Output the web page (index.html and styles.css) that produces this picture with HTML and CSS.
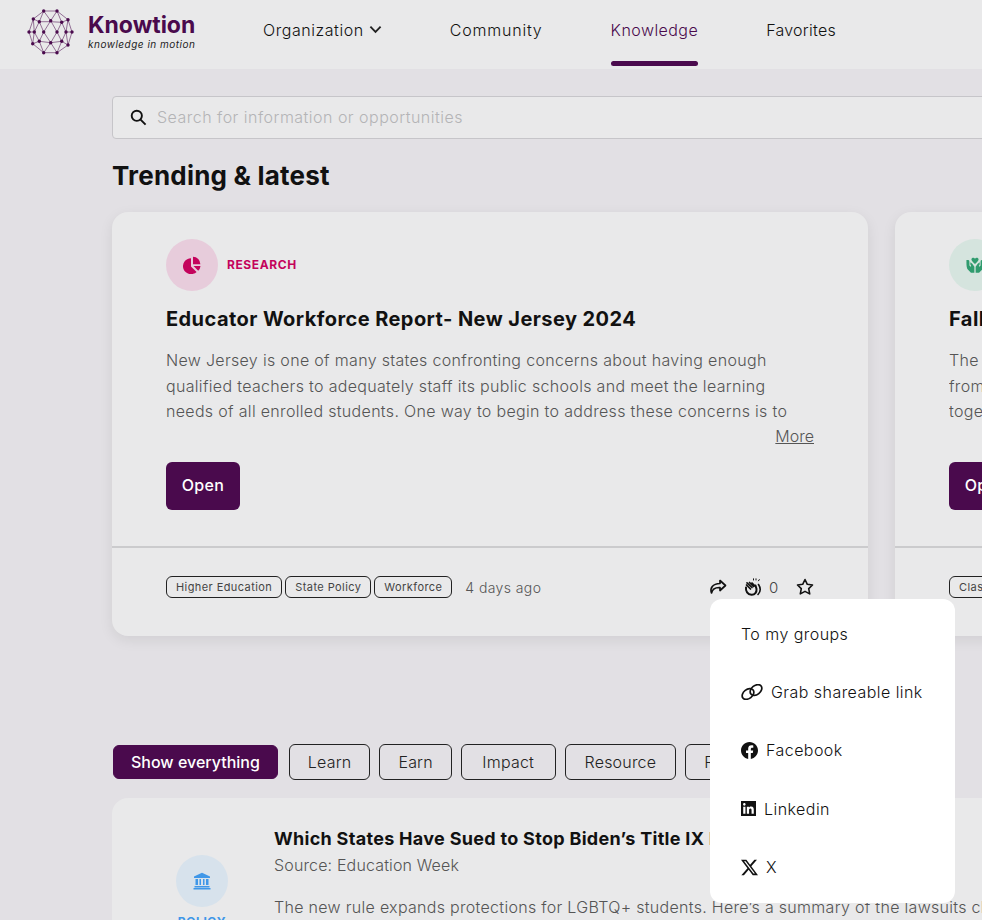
FILE: index.html
```html
<!DOCTYPE html>
<html lang="en">
<head>
    <meta charset="UTF-8">
    <meta name="viewport" content="width=device-width, initial-scale=1.0">
    <title>Knowtion</title>
    <link rel="stylesheet" href="styles.css">
</head>
<body>
    <header class="topbar">
        <a href="#" class="brand">
            <svg class="brand-mark" viewBox="26 7 50 50" fill="none" stroke="#4a0a4d" stroke-width=".55">
                <path d="M43.7 11H57L68 19.7 72 32 68 45 57 52.7H43.7L32.7 43.7 29 32 33.3 19Z"/>
                <path d="M43.7 11 39.3 21.7 33.3 19M43.7 11 50.7 20.7 57 11 61.7 22.3 68 19.7M39.3 21.7H50.7L61.7 22.3 66 32 61.7 41.3 50.7 42.7 39.3 41.3 34.3 32 39.3 21.7"/>
                <path d="M29 32H34.3M66 32H72M39.3 21.7 43.7 32 39.3 41.3M50.7 20.7 43.7 32 50.7 42.7 57 32 50.7 20.7M61.7 22.3 57 32 61.7 41.3M39.3 41.3 32.7 43.7M61.7 41.3 68 45M39.3 41.3 43.7 52.7 50.7 42.7 57 52.7 61.7 41.3M33.3 19 34.3 32 32.7 43.7M68 19.7 66 32 68 45"/>
                <g fill="#4a0a4d" stroke="none">
                    <circle cx="43.7" cy="11" r="1.7"/><circle cx="57" cy="11" r="1.7"/>
                    <circle cx="33.3" cy="19" r="1.7"/><circle cx="68" cy="19.7" r="1.7"/>
                    <circle cx="39.3" cy="21.7" r="1.7"/><circle cx="50.7" cy="20.7" r="1.7"/><circle cx="61.7" cy="22.3" r="1.7"/>
                    <circle cx="29" cy="32" r="1.7"/><circle cx="34.3" cy="32" r="1.7"/><circle cx="43.7" cy="32" r="1.7"/>
                    <circle cx="57" cy="32" r="1.7"/><circle cx="66" cy="32" r="1.7"/><circle cx="72" cy="32" r="1.7"/>
                    <circle cx="39.3" cy="41.3" r="1.7"/><circle cx="50.7" cy="42.7" r="1.7"/><circle cx="61.7" cy="41.3" r="1.7"/>
                    <circle cx="32.7" cy="43.7" r="1.7"/><circle cx="68" cy="45" r="1.7"/>
                    <circle cx="43.7" cy="52.7" r="1.7"/><circle cx="57" cy="52.7" r="1.7"/>
                </g>
            </svg>
            <span class="brand-text">
                <span class="brand-name">Knowtion</span>
                <span class="brand-tag">knowledge in motion</span>
            </span>
        </a>
        <nav class="nav">
            <a href="#" class="nav-link">Organization
                <svg class="chevron" viewBox="0 0 14 9" fill="none" stroke="#222" stroke-width="2"><path d="M1.5 1.5 7 7l5.5-5.5"/></svg>
            </a>
            <a href="#" class="nav-link nav-wide">Community</a>
            <a href="#" class="nav-link active">Knowledge</a>
            <a href="#" class="nav-link nav-narrow">Favorites</a>
        </nav>
    </header>

    <main class="content">
        <div class="search">
            <svg class="search-icon" viewBox="0 0 18 18" fill="none" stroke="#111" stroke-width="2"><circle cx="7.2" cy="7.2" r="5.4"/><path d="M11.2 11.2 16.5 16.5"/></svg>
            <span class="search-hint">Search for information or opportunities</span>
        </div>

        <h1 class="section-title">Trending &amp; latest</h1>

        <div class="cards">
            <article class="card">
                <div class="card-body">
                    <div class="kind">
                        <span class="kind-circle research-bg">
                            <svg class="kind-icon" viewBox="0 0 18 18" fill="#c4035c"><path d="M8 2.2v8.3l5.6 5.4A8 8 0 1 1 8 2.2Z"/><path d="M10 .8a7.4 7.4 0 0 1 7.4 7.4H10Z"/><path d="M10.500 10h7a7.600 7.600 0 0 1-2.300 4.800Z"/></svg>
                        </span>
                        <span class="kind-label research">RESEARCH</span>
                    </div>
                    <h2 class="card-title">Educator Workforce Report- New Jersey 2024</h2>
                    <p class="card-text">New Jersey is one of many states confronting concerns about having enough qualified teachers to adequately staff its public schools and meet the learning needs of all enrolled students. One way to begin to address these concerns is to</p>
                    <div class="more-row"><a href="#" class="more">More</a></div>
                    <button class="btn-open">Open</button>
                </div>
                <div class="card-foot">
                    <span class="tag">Higher Education</span>
                    <span class="tag">State Policy</span>
                    <span class="tag">Workforce</span>
                    <span class="time">4 days ago</span>
                    <div class="actions">
                        <svg class="act-icon" viewBox="0 0 18 16" fill="none" stroke="#111" stroke-width="1.700"><path d="M11 1.500 16.500 6.500 11 11.500V8.500C6.500 8.300 3.500 9.500 2.500 14 .8 9 3.500 4.800 11 4.500Z" stroke-linejoin="round"/></svg>
                        <svg class="act-icon clap" viewBox="0 0 18 18" fill="none" stroke="#111" stroke-linecap="round">
                            <path d="M2 9.500C1.500 13 3.500 16.500 7.500 16.800 11 17 12.800 14 12.500 11L11.500 7.500" stroke-width="2"/>
                            <path d="M2.500 7 6.500 11M3 4.800 8 9.500M5.500 4.500 9.500 8.500M8 5 11 8" stroke-width="1.700"/>
                            <path d="M14.500 6.500C16.500 9.500 16.800 13.500 14 16.500" stroke-width="1.600"/>
                            <path d="M9.500 2V.8M12 2V.8M14.500 2.800 15.300 1.600" stroke-width="1"/>
                        </svg>
                        <span class="count">0</span>
                        <svg class="act-icon star" viewBox="0 0 18 18" fill="none" stroke="#111" stroke-width="1.600" stroke-linejoin="round"><path d="M9 1.500 11.300 6.300 16.500 7 12.700 10.600 13.700 15.900 9 13.400 4.300 15.900 5.300 10.600 1.500 7 6.700 6.300Z"/></svg>

                        <div class="share-menu">
                            <a href="#" class="share-item first">To my groups</a>
                            <a href="#" class="share-item">
                                <svg class="share-link" viewBox="0 0 22 16" fill="none" stroke="#111" stroke-width="1.700">
                                    <ellipse cx="7" cy="10" rx="6.500" ry="4.500" transform="rotate(-38 7 10)"/>
                                    <ellipse cx="15" cy="6" rx="6.500" ry="4.500" transform="rotate(-38 15 6)"/>
                                </svg>
                                Grab shareable link
                            </a>
                            <a href="#" class="share-item">
                                <svg class="share-svg" viewBox="0 0 24 24" fill="#111"><path d="M24 12.073c0-6.627-5.373-12-12-12s-12 5.373-12 12c0 5.990 4.388 10.954 10.125 11.854v-8.385H7.078v-3.470h3.047V9.430c0-3.007 1.792-4.669 4.533-4.669 1.312 0 2.686.235 2.686.235v2.953H15.830c-1.491 0-1.956.925-1.956 1.874v2.250h3.328l-.532 3.470h-2.796v8.385C19.612 23.027 24 18.062 24 12.073z"/></svg>
                                Facebook
                            </a>
                            <a href="#" class="share-item">
                                <svg class="share-in" viewBox="0 0 24 24" fill="#111"><path d="M0 0H24V24H0ZM20.447 20.452v-6.286c0-3.085-.666-5.455-4.267-5.455-1.733 0-2.893.950-3.370 1.850h-.046V9H9.351v11.452h3.554v-5.667c0-1.494.283-2.939 2.136-2.939 1.825 0 1.852 1.709 1.852 3.037v5.569ZM5.337 7.433c1.139 0 2.064-.926 2.064-2.065 0-1.138-.925-2.063-2.064-2.063-1.143 0-2.063.925-2.063 2.063 0 1.139.920 2.065 2.063 2.065ZM7.119 20.452V9H3.555v11.452Z" fill-rule="evenodd"/></svg>
                                Linkedin
                            </a>
                            <a href="#" class="share-item">
                                <svg class="share-svg" viewBox="0 0 24 24" fill="#111"><path d="M18.901 1.153h3.680l-8.040 9.190L24 22.846h-7.406l-5.800-7.584-6.638 7.584H.474l8.600-9.830L0 1.154h7.594l5.243 6.932ZM17.610 20.644h2.039L6.486 3.240H4.298Z"/></svg>
                                X
                            </a>
                        </div>
                    </div>
                </div>
            </article>

            <article class="card">
                <div class="card-body">
                    <div class="kind">
                        <span class="kind-circle impact-bg">
                            <svg class="kind-icon" viewBox="0 0 20 18" fill="#2f9b6e"><path d="M10 2C11 .3 14 .8 14 3 14 4.500 11.500 6.500 10 8 8.500 6.500 6 4.500 6 3 6 .8 9 .3 10 2Z"/><path d="M.5 3.500H2.500C3.500 3.500 3.800 4.500 3.800 6V9.500L5 11 5.800 10.200 4.800 8.500V6L7 7.500 9.300 11V17.500H5.500L1.500 13.500C.3 11 .5 7 .5 3.500Z"/><path d="M19.500 3.500H17.500C16.500 3.500 16.200 4.500 16.200 6V9.500L15 11 14.200 10.200 15.200 8.500V6L13 7.500 10.700 11V17.500H14.500L18.500 13.500C19.700 11 19.500 7 19.500 3.500Z"/></svg>
                        </span>
                    </div>
                    <h2 class="card-title">Fall</h2>
                    <p class="card-text short">The U<br>from<br>toge</p>
                    <div class="more-row"></div>
                    <button class="btn-open">Open</button>
                </div>
                <div class="card-foot">
                    <span class="tag">Class</span>
                </div>
            </article>
        </div>

        <div class="filters">
            <a href="#" class="chip selected">Show everything</a>
            <a href="#" class="chip">Learn</a>
            <a href="#" class="chip">Earn</a>
            <a href="#" class="chip chip-wide">Impact</a>
            <a href="#" class="chip chip-mid">Resource</a>
            <a href="#" class="chip">Resources</a>
        </div>

        <article class="list-card">
            <div class="list-kind">
                <span class="kind-circle policy-bg">
                    <svg class="kind-icon" viewBox="0 0 18 18" fill="#3f97e8"><path d="M9 .8 17 4.500V6H1V4.500Z"/><path d="M2.500 7H5V13H2.500ZM6.500 7H8V13H6.500ZM10 7H11.500V13H10ZM13 7H15.500V13H13Z"/><path d="M1.500 14H16.500V15.500H1.500ZM.5 16H17.500V17.500H.5Z"/></svg>
                </span>
                <span class="kind-label policy">POLICY</span>
            </div>
            <div class="list-main">
                <h3 class="list-title">Which States Have Sued to Stop Biden’s Title IX Rule</h3>
                <div class="list-source">Source: Education Week</div>
                <p class="list-text">The new rule expands protections for LGBTQ+ students. Here’s a summary of the lawsuits challenging it.</p>
            </div>
        </article>
    </main>
</body>
</html>
```

FILE: styles.css
```css
html, body {
    height: 920px;
    overflow: hidden;
}

body {
    margin: 0;
    background-color: #e2e0e4;
    font-family: 'Inter', 'Liberation Sans', sans-serif;
    color: #111;
}

a {
    color: inherit;
    text-decoration: none;
}

.topbar {
    height: 69px;
    background-color: #e9e9ea;
    display: flex;
    align-items: stretch;
}

.brand {
    display: flex;
    align-items: center;
    gap: 12px;
    margin-left: 26px;
    padding-bottom: 5px;
    width: 237px;
    flex-shrink: 0;
}

.brand-mark {
    width: 50px;
    height: 50px;
}

.brand-text {
    display: flex;
    flex-direction: column;
}

.brand-name {
    font-size: 23px;
    font-weight: 700;
    line-height: 25px;
    color: #4a0a4d;
}

.brand-tag {
    font-size: 10px;
    font-style: italic;
    line-height: 13px;
    letter-spacing: 0.5px;
    color: #222;
}

.nav {
    display: flex;
    gap: 68px;
}

.nav-link {
    display: block;
    padding-top: 18px;
    font-size: 16px;
    line-height: 24px;
    font-weight: 300;
    letter-spacing: 0.55px;
    color: #111;
    white-space: nowrap;
}

.nav-link::after {
    content: "";
    display: block;
    height: 5px;
    margin-top: 19px;
    border-radius: 3px;
}

.nav-wide {
    letter-spacing: 0.8px;
}

.nav-narrow {
    letter-spacing: 0.25px;
}

.nav-link.active {
    color: #4a0a4d;
    letter-spacing: 0.45px;
}

.nav-link.active::after {
    background-color: #4a0a4d;
}

.chevron {
    width: 13px;
    height: 9px;
    vertical-align: 2px;
}

.content {
    padding-left: 112px;
    width: 1400px;
}

.search {
    margin-top: 27px;
    height: 41px;
    border: 1px solid #c6c5c9;
    border-radius: 4px;
    background-color: #e9e9ea;
    display: flex;
    align-items: center;
    padding-left: 17px;
    gap: 10px;
}

.search-icon {
    width: 17px;
    height: 17px;
}

.search-hint {
    font-size: 16px;
    font-weight: 300;
    letter-spacing: 0.48px;
    color: #b4b4b6;
    padding-bottom: 2px;
}

.section-title {
    margin: 20px 0 19px;
    font-size: 26px;
    line-height: 34px;
    font-weight: 700;
    letter-spacing: 0.2px;
    color: #111;
}

.cards {
    display: flex;
    gap: 27px;
}

.card {
    width: 756px;
    height: 424px;
    flex-shrink: 0;
    background-color: #e9e9ea;
    border-radius: 16px;
    box-shadow: 0 4px 14px rgba(0, 0, 0, 0.08);
    display: flex;
    flex-direction: column;
}

.card-body {
    height: 336px;
    box-sizing: border-box;
    padding: 27px 54px 0;
    border-bottom: 2px solid #cbcbcd;
}

.kind {
    display: flex;
    align-items: center;
    gap: 9px;
    height: 52px;
}

.kind-circle {
    width: 52px;
    height: 52px;
    border-radius: 50%;
    display: flex;
    align-items: center;
    justify-content: center;
    flex-shrink: 0;
}

.research-bg { background-color: #e7ccdb; }
.impact-bg { background-color: #d5e4de; }
.policy-bg { background-color: #d7e2ec; }

.kind-icon {
    width: 18px;
    height: 18px;
}

.kind-label {
    font-size: 12px;
    font-weight: 700;
    letter-spacing: 0.6px;
}

.research {
    color: #c4035c;
    padding-bottom: 2px;
}

.policy {
    color: #3f97e8;
    margin-top: 7px;
}

.card-title {
    margin: 14px 0 15px;
    font-size: 20px;
    line-height: 28px;
    font-weight: 700;
    letter-spacing: 0.43px;
    color: #111;
}

.card-text {
    margin: 0;
    height: 76px;
    overflow: hidden;
    font-size: 16px;
    line-height: 25.500px;
    font-weight: 300;
    letter-spacing: 0.32px;
    color: #555;
}

.more-row {
    height: 25px;
    text-align: right;
    font-size: 16px;
    line-height: 25px;
    font-weight: 300;
    color: #555;
}

.more {
    text-decoration: underline;
}

.btn-open {
    margin-top: 13px;
    display: block;
    height: 48px;
    width: 74px;
    padding-bottom: 3px;
    border: none;
    border-radius: 6px;
    background-color: #4a0a4d;
    color: #fff;
    font-family: inherit;
    font-size: 16px;
    font-weight: 500;
    letter-spacing: 0.3px;
    cursor: pointer;
}

.card-foot {
    flex: 1;
    padding: 0 54px 10px;
    display: flex;
    align-items: center;
    gap: 3px;
}

.tag {
    height: 22px;
    box-sizing: border-box;
    display: flex;
    align-items: center;
    padding: 0 9px;
    border: 1px solid #222;
    border-radius: 6px;
    font-size: 11px;
    letter-spacing: 0.42px;
    color: #444;
    white-space: nowrap;
}

.time {
    margin-left: 10px;
    font-size: 14px;
    font-weight: 300;
    letter-spacing: 0.4px;
    color: #555;
}

.actions {
    margin-left: auto;
    position: relative;
    display: flex;
    align-items: center;
    height: 20px;
}

.act-icon {
    width: 18px;
    height: 16px;
}

.clap {
    margin-left: 17px;
    height: 18px;
}

.count {
    margin-left: 7px;
    font-size: 15px;
    font-weight: 300;
    color: #444;
    width: 11px;
}

.star {
    margin-left: 16px;
    height: 18px;
}

.share-menu {
    position: absolute;
    top: 22px;
    left: 1px;
    width: 245px;
    height: 304px;
    box-sizing: border-box;
    padding: 7px 31px;
    background-color: #fff;
    border-radius: 12px;
}

.share-item {
    display: flex;
    align-items: center;
    gap: 8px;
    height: 58.500px;
    font-size: 16px;
    font-weight: 300;
    letter-spacing: 0.45px;
    color: #111;
    white-space: nowrap;
}

.share-item.first {
    height: 56.500px;
}

.share-link {
    width: 22px;
    height: 16px;
}

.share-svg {
    width: 17px;
    height: 17px;
}

.share-in {
    width: 15px;
    height: 15px;
}

.filters {
    margin-top: 108px;
    margin-left: 1px;
    display: flex;
    gap: 9px;
    align-items: center;
}

.chip {
    height: 36px;
    box-sizing: border-box;
    display: flex;
    align-items: center;
    padding: 0 18px 1px;
    border: 1px solid #222;
    border-radius: 6px;
    font-size: 16px;
    font-weight: 300;
    letter-spacing: 0.2px;
    color: #222;
    white-space: nowrap;
}

.chip-wide {
    padding: 0 20.500px 1px;
}

.chip-mid {
    padding: 0 19px 1px;
}

.chip.selected {
    height: 34px;
    padding: 0 17px 1px;
    background-color: #4a0a4d;
    border-color: #4a0a4d;
    color: #fff;
    font-weight: 500;
    letter-spacing: 0;
    margin-right: 2px;
}

.list-card {
    margin-top: 18px;
    width: 1200px;
    height: 300px;
    background-color: #e9e9ea;
    border-radius: 16px;
    display: flex;
}

.list-kind {
    width: 162px;
    box-sizing: border-box;
    padding: 57px 0 0 18px;
    flex-shrink: 0;
    display: flex;
    flex-direction: column;
    align-items: center;
}

.list-main {
    padding-top: 28px;
}

.list-title {
    margin: 0;
    font-size: 18px;
    line-height: 26px;
    font-weight: 700;
    letter-spacing: 0.3px;
    color: #111;
}

.list-source {
    font-size: 16px;
    line-height: 26px;
    font-weight: 300;
    letter-spacing: 0.15px;
    color: #555;
}

.list-text {
    margin: 17px 0 0;
    font-size: 16px;
    line-height: 25px;
    font-weight: 300;
    letter-spacing: 0.3px;
    color: #555;
}
```
